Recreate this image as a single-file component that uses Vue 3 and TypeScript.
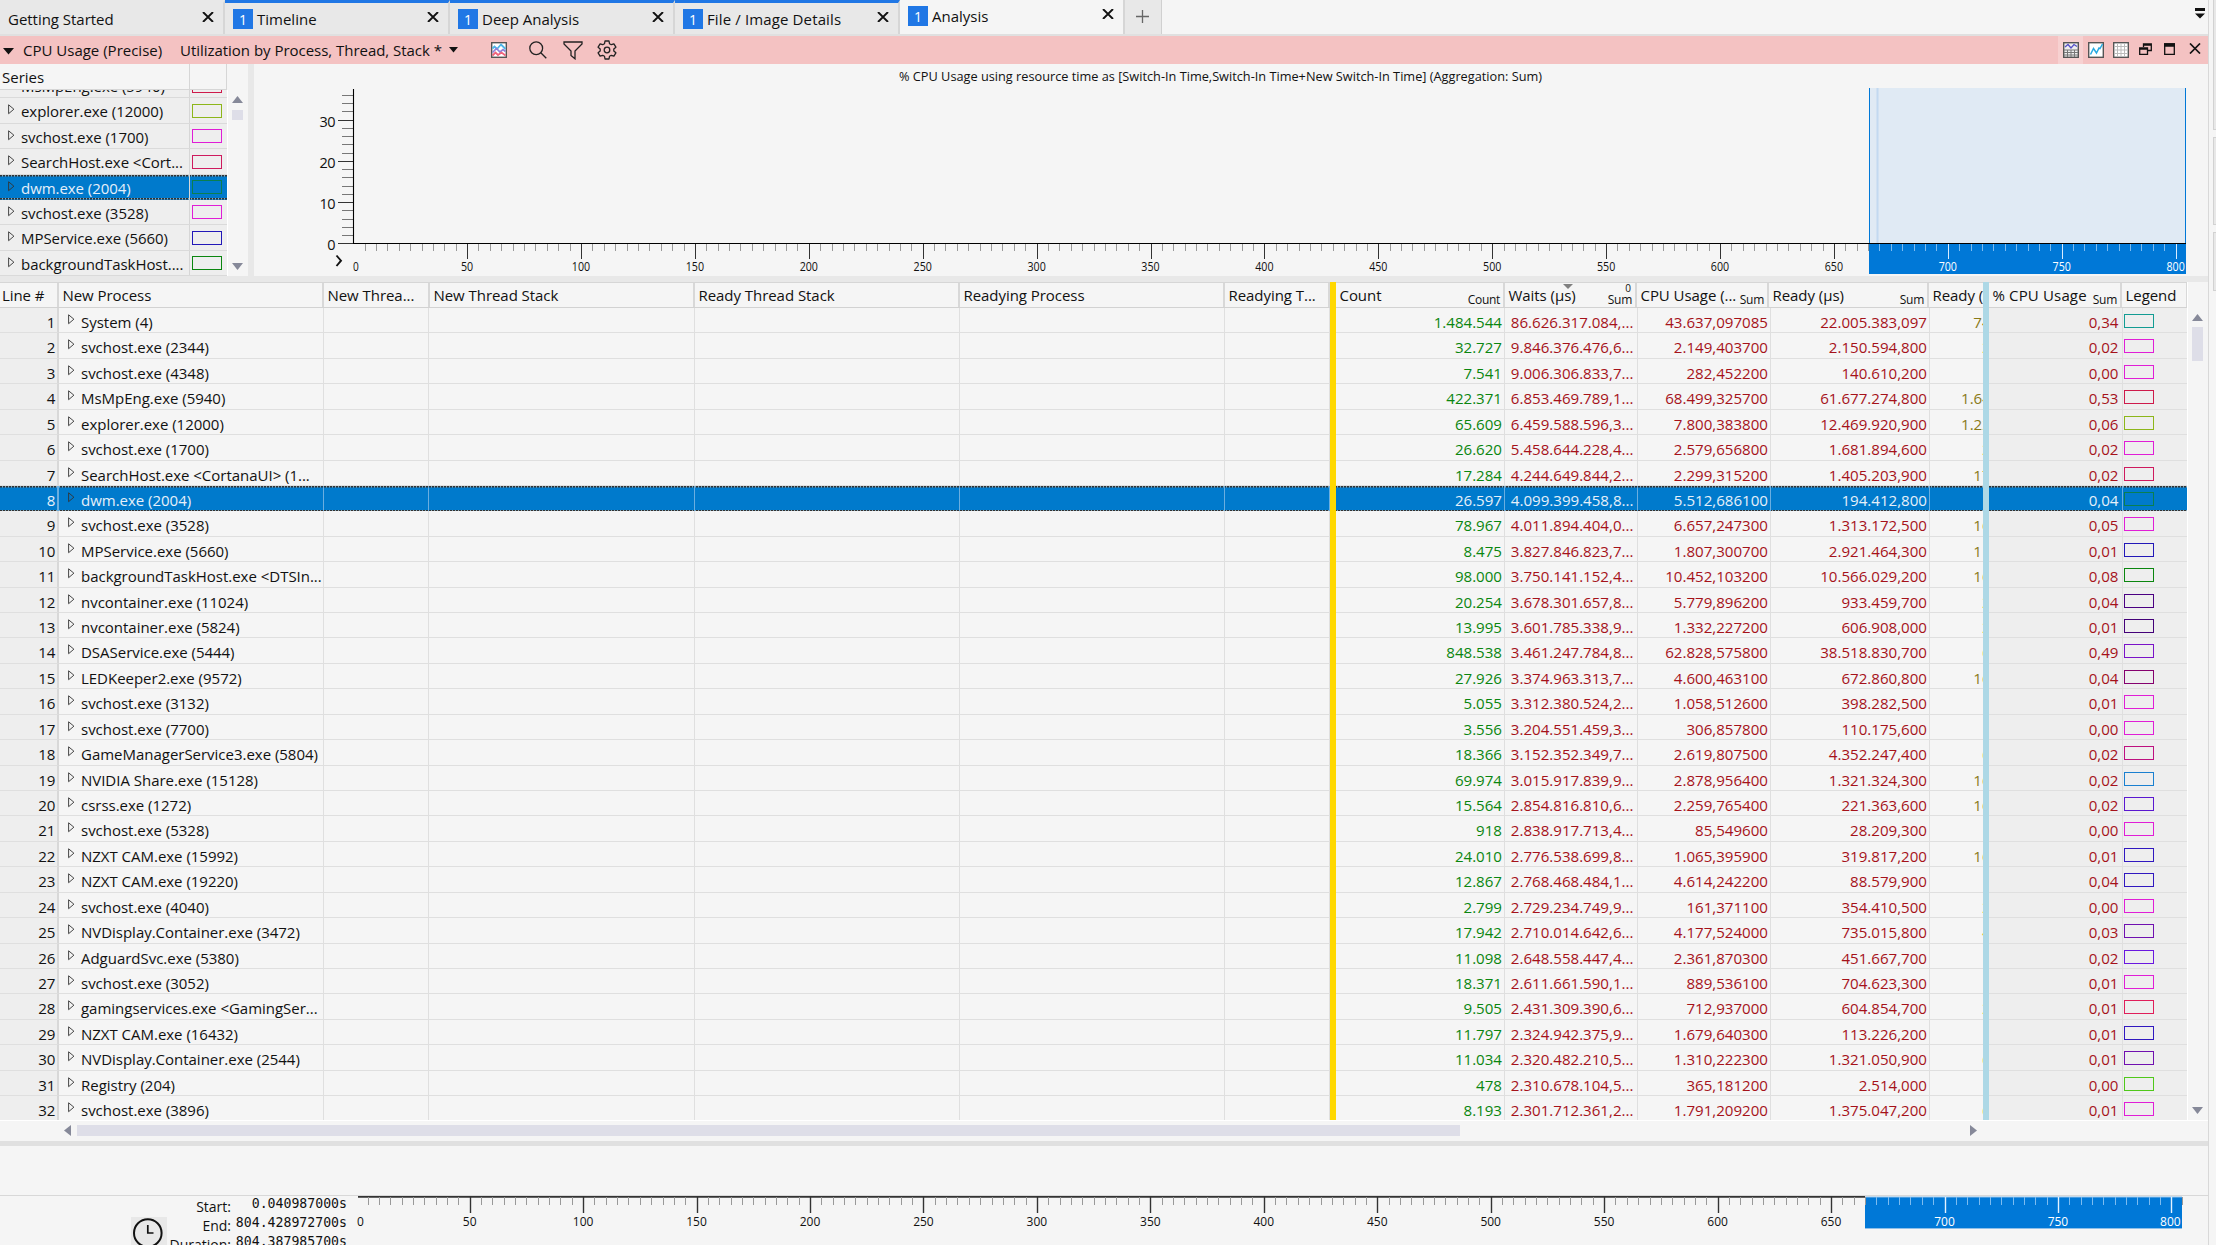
<script setup lang="ts">
interface Tab { title: string; badge: boolean; active?: boolean }
interface Row {
  name: string; count: string; waits: string; cpu: string; ready: string
  max: string; pct: string; color: string
}
interface Tick { x: number; major: boolean; selected: boolean }
interface Label { x: number; text: string; selected: boolean }

const tabs: Tab[] = [
  { title: 'Getting Started', badge: false },
  { title: 'Timeline', badge: true },
  { title: 'Deep Analysis', badge: true },
  { title: 'File / Image Details', badge: true },
  { title: 'Analysis', badge: true, active: true },
]

const magenta = '#e01ed6'
const source: string[][] = [
  ['System (4)', '1.484.544', '86.626.317.084,...', '43.637,097085', '22.005.383,097', ' 74', '0,34', '#129c93'],
  ['svchost.exe (2344)', '32.727', '9.846.376.476,6...', '2.149,403700', '2.150.594,800', '  2', '0,02', magenta],
  ['svchost.exe (4348)', '7.541', '9.006.306.833,7...', '282,452200', '140.610,200', '', '0,00', magenta],
  ['MsMpEng.exe (5940)', '422.371', '6.853.469.789,1...', '68.499,325700', '61.677.274,800', '1.64', '0,53', '#ce1a4b'],
  ['explorer.exe (12000)', '65.609', '6.459.588.596,3...', '7.800,383800', '12.469.920,900', '1.22', '0,06', '#8db61a'],
  ['svchost.exe (1700)', '26.620', '5.458.644.228,4...', '2.579,656800', '1.681.894,600', '  2', '0,02', magenta],
  ['SearchHost.exe <CortanaUI> (1...', '17.284', '4.244.649.844,2...', '2.299,315200', '1.405.203,900', ' 17', '0,02', '#ce1a5e'],
  ['dwm.exe (2004)', '26.597', '4.099.399.458,8...', '5.512,686100', '194.412,800', '', '0,04', '#0b7f50'],
  ['svchost.exe (3528)', '78.967', '4.011.894.404,0...', '6.657,247300', '1.313.172,500', ' 16', '0,05', magenta],
  ['MPService.exe (5660)', '8.475', '3.827.846.823,7...', '1.807,300700', '2.921.464,300', ' 11', '0,01', '#2218b8'],
  ['backgroundTaskHost.exe <DTSIn...', '98.000', '3.750.141.152,4...', '10.452,103200', '10.566.029,200', ' 16', '0,08', '#0a860f'],
  ['nvcontainer.exe (11024)', '20.254', '3.678.301.657,8...', '5.779,896200', '933.459,700', '  2', '0,04', '#4b0082'],
  ['nvcontainer.exe (5824)', '13.995', '3.601.785.338,9...', '1.332,227200', '606.908,000', '  2', '0,01', '#430078'],
  ['DSAService.exe (5444)', '848.538', '3.461.247.784,8...', '62.828,575800', '38.518.830,700', '  6', '0,49', '#7a12c8'],
  ['LEDKeeper2.exe (9572)', '27.926', '3.374.963.313,7...', '4.600,463100', '672.860,800', ' 16', '0,04', '#85006e'],
  ['svchost.exe (3132)', '5.055', '3.312.380.524,2...', '1.058,512600', '398.282,500', '', '0,01', magenta],
  ['svchost.exe (7700)', '3.556', '3.204.551.459,3...', '306,857800', '110.175,600', '', '0,00', magenta],
  ['GameManagerService3.exe (5804)', '18.366', '3.152.352.349,7...', '2.619,807500', '4.352.247,400', '  6', '0,02', '#be1080'],
  ['NVIDIA Share.exe (15128)', '69.974', '3.015.917.839,9...', '2.878,956400', '1.321.324,300', ' 16', '0,02', '#1a80d0'],
  ['csrss.exe (1272)', '15.564', '2.854.816.810,6...', '2.259,765400', '221.363,600', ' 16', '0,02', '#5a18d0'],
  ['svchost.exe (5328)', '918', '2.838.917.713,4...', '85,549600', '28.209,300', '', '0,00', magenta],
  ['NZXT CAM.exe (15992)', '24.010', '2.776.538.699,8...', '1.065,395900', '319.817,200', ' 16', '0,01', '#3018c0'],
  ['NZXT CAM.exe (19220)', '12.867', '2.768.468.484,1...', '4.614,242200', '88.579,900', '', '0,04', '#3018c0'],
  ['svchost.exe (4040)', '2.799', '2.729.234.749,9...', '161,371100', '354.410,500', '  2', '0,00', magenta],
  ['NVDisplay.Container.exe (3472)', '17.942', '2.710.014.642,6...', '4.177,524000', '735.015,800', '  4', '0,03', '#7010b0'],
  ['AdguardSvc.exe (5380)', '11.098', '2.648.558.447,4...', '2.361,870300', '451.667,700', '', '0,02', '#6a18e0'],
  ['svchost.exe (3052)', '18.371', '2.611.661.590,1...', '889,536100', '704.623,300', '', '0,01', magenta],
  ['gamingservices.exe <GamingSer...', '9.505', '2.431.309.390,6...', '712,937000', '604.854,700', '  2', '0,01', '#e01e5a'],
  ['NZXT CAM.exe (16432)', '11.797', '2.324.942.375,9...', '1.679,640300', '113.226,200', '', '0,01', '#3018c0'],
  ['NVDisplay.Container.exe (2544)', '11.034', '2.320.482.210,5...', '1.310,222300', '1.321.050,900', '  6', '0,01', '#7010b0'],
  ['Registry (204)', '478', '2.310.678.104,5...', '365,181200', '2.514,000', '', '0,00', '#4fc81a'],
  ['svchost.exe (3896)', '8.193', '2.301.712.361,2...', '1.791,209200', '1.375.047,200', '  6', '0,01', magenta],
]
const rows: Row[] = source.map(([name, count, waits, cpu, ready, max, pct, color]) =>
  ({ name, count, waits, cpu, ready, max, pct, color }))
const selectedRow = 7

const series = [
  { name: 'MsMpEng.exe (5940)', color: '#ce1a4b' },
  { name: 'explorer.exe (12000)', color: '#8db61a' },
  { name: 'svchost.exe (1700)', color: magenta },
  { name: 'SearchHost.exe <Cort...', color: '#ce1a5e' },
  { name: 'dwm.exe (2004)', color: '#0b7f50' },
  { name: 'svchost.exe (3528)', color: magenta },
  { name: 'MPService.exe (5660)', color: '#2218b8' },
  { name: 'backgroundTaskHost....', color: '#0a860f' },
]

function makeTicks(origin: number, scale: number, selectionStart: number): Tick[] {
  const out: Tick[] = []
  for (let v = 5; v <= 800; v += 5) {
    const x = Math.round(origin + v * scale)
    out.push({ x, major: v % 50 === 0, selected: x > selectionStart })
  }
  return out
}
function makeLabels(origin: number, scale: number, selectionStart: number): Label[] {
  const out: Label[] = []
  for (let v = 50; v <= 800; v += 50) {
    const x = origin + v * scale
    out.push({ x, text: String(v), selected: x > selectionStart })
  }
  return out
}

/* graph coordinates are local to their svg: the upper one starts at x = 254, the lower one at x = 350 */
const graphTicks = makeTicks(99.2, 2.278, 1616)
const graphLabels = makeLabels(99.2, 2.278, 1616)
const rangeTicks = makeTicks(6.2, 2.269, 1515)
const rangeLabels = makeLabels(6.2, 2.269, 1515)
const yTicks = Array.from({ length: 19 }, (_, i) => ({ y: Math.round(179.3 - i * 8.25), major: i % 5 === 0, value: i * 2 }))
const yMajors = yTicks.filter(t => t.major)
</script>

<template>
  <div class="window">
    <div class="main">
      <div class="tabs">
        <div v-for="t in tabs" :key="t.title" class="tab" :class="{ active: t.active, badged: t.badge && !t.active }">
          <span v-if="t.badge" class="badge">1</span>
          <span class="tab-title">{{ t.title }}</span>
          <svg class="tab-x" width="12" height="10"><path d="M1 0 11 10M11 0 1 10" stroke="#111" stroke-width="1.9" fill="none" /></svg>
        </div>
        <div class="tab-add"><svg width="13" height="13"><path d="M6.5 0V13M0 6.5H13" stroke="#666" stroke-width="1.3" /></svg></div>
        <svg class="tab-menu" width="10" height="11"><path d="M0 0H10V3H0ZM0 5.500H10L5 10.500Z" fill="#111" /></svg>
      </div>

      <div class="toolbar">
        <svg class="tri-a" width="11" height="7"><path d="M0 0H11L5.5 6.500Z" fill="#111" /></svg>
        <span class="tool-title">CPU Usage (Precise)</span>
        <span class="tool-preset">Utilization by Process, Thread, Stack *</span>
        <svg class="tri-b" width="9" height="6"><path d="M0 0H9L4.500 5.500Z" fill="#111" /></svg>
        <svg class="ic-chart" width="16" height="16" viewBox="0 0 16 16" fill="none">
          <rect x=".7" y=".7" width="14.600" height="14.600" fill="#fff" stroke="#555" stroke-width="1.400" />
          <path d="M1.500 6.500 3.500 4.500 6 7 10 2.500 12 4.500 14.500 7" stroke="#4db5e8" stroke-width="1.800" />
          <path d="M1.500 10.500 5.500 6.500 9 10 12 7.500 14.500 9.500" stroke="#8f80d8" stroke-width="1.700" />
          <path d="M1.500 13.500 4.500 10.500 7 13 10.500 10.500 14.500 13.500" stroke="#f0637c" stroke-width="1.800" />
        </svg>
        <svg class="ic-search" width="18" height="18" viewBox="0 0 18 18" fill="none" stroke="#222" stroke-width="1.300">
          <circle cx="7.200" cy="7.200" r="6.400" /><path d="M11.800 11.800 17.300 17.300" />
        </svg>
        <svg class="ic-filter" width="20" height="19" viewBox="0 0 20 19" fill="none" stroke="#222" stroke-width="1.300">
          <path d="M1 1H19V3L12 10V17.800L8 14.500V10L1 3Z" />
        </svg>
        <svg class="ic-gear" width="20" height="20" viewBox="0 0 20 20" fill="none" stroke="#222" stroke-width="1.300" stroke-linejoin="round">
          <path d="M8 1h4l.5 2.700 1.800 1 2.600-.9 2 3.400-2.100 1.800v2l2.100 1.800-2 3.400-2.600-.9-1.800 1L12 19H8l-.5-2.700-1.800-1-2.600.9-2-3.400L3.200 11V9L1.100 7.200l2-3.400 2.600.9 1.800-1Z" />
          <circle cx="10" cy="10" r="2.800" />
        </svg>
        <div class="tool-right">
          <div class="tool-on">
            <svg width="16" height="16" viewBox="0 0 16 16" fill="none">
              <rect x=".7" y=".7" width="14.600" height="14.600" fill="#eee" stroke="#555" stroke-width="1.400" />
              <path d="M2 5 5 2.500 8 6 11 2.500 14 4.500" stroke="#5550c8" stroke-width="1.300" />
              <path d="M1 8H15M1 10.500H15M1 13H15M4.500 8V15M8 8V15M11.500 8V15" stroke="#777" />
            </svg>
          </div>
          <svg class="ic-r1" width="16" height="16" viewBox="0 0 16 16" fill="none">
            <rect x=".7" y=".7" width="14.600" height="14.600" fill="#fff" stroke="#555" stroke-width="1.400" />
            <path d="M2.500 12.500 5.500 6.500 8.500 11 11 6 12 6.500 14.500 2" stroke="#27a9e1" stroke-width="1.500" />
          </svg>
          <svg class="ic-r2" width="16" height="16" viewBox="0 0 16 16" fill="none">
            <rect x=".7" y=".7" width="14.600" height="14.600" fill="#fff" stroke="#555" stroke-width="1.400" />
            <path d="M1 4.500H15M1 8H15M1 11.500H15M4.500 1V15M8 1V15M11.500 1V15" stroke="#bbb" />
          </svg>
          <svg class="ic-r3" width="13" height="12" viewBox="0 0 13 12" fill="none" stroke="#111" stroke-width="1.300">
            <path d="M4.500 4V1H12.300V7.500H9M4.500 2H12.300" /><path d="M.7 5H8.500V11.300H.7ZM.7 6H8.500" />
          </svg>
          <svg class="ic-r4" width="11" height="12" fill="none" stroke="#111"><path d="M.7 1V11.300H10.300V1Z" stroke-width="1.300" /><path d="M0 2H11" stroke-width="3.500" /></svg>
          <svg class="ic-r5" width="12" height="11"><path d="M1 .5 11 10.500M11 .5 1 10.500" stroke="#111" stroke-width="1.700" /></svg>
        </div>
      </div>

      <div class="upper">
        <div class="series">
          <div class="series-head"><span>Series</span><span></span></div>
          <div class="series-wrap">
            <div class="series-body">
              <div v-for="(s, i) in series" :key="s.name" class="srow" :class="{ sel: i === 4 }">
                <div class="sname">
                  <svg class="exp" width="7" height="11"><path d="M.6 .8V9.700L5.900 5.200Z" fill="none" stroke="#333" stroke-width=".9" /></svg>
                  <span>{{ s.name }}</span>
                </div>
                <div class="sswatch"><i class="swatch" :style="{ borderColor: s.color }"></i></div>
              </div>
            </div>
            <div class="sbar">
              <svg width="11" height="7"><path d="M5.500 0 11 7H0Z" fill="#868999" /></svg>
              <i></i>
              <svg class="down" width="11" height="7"><path d="M0 0H11L5.500 7Z" fill="#868999" /></svg>
            </div>
          </div>
        </div>
        <div class="vsplit"></div>
        <svg class="graph" width="1954" height="212" viewBox="0 0 1954 212">
          <text x="645" y="16.500" font-size="13" textLength="643" lengthAdjust="spacingAndGlyphs" fill="#111">% CPU Usage using resource time as [Switch-In Time,Switch-In Time+New Switch-In Time] (Aggregation: Sum)</text>
          <rect x="1615.500" y="24" width="316.500" height="155" fill="#e0eaf4" />
          <path d="M1623.500 24V179" stroke="#c3d9f0" stroke-width="2" />
          <rect x="1615" y="180" width="317" height="30" fill="#0078d7" />
          <path d="M1615.500 24V180M1931.500 24V180" stroke="#0078d7" stroke-width="1" />
          <path v-for="t in yTicks" :key="t.y" :d="`M${t.major ? 84 : 88} ${t.y}.5H99`" :stroke="t.major ? '#333' : '#777'" />
          <path d="M99.500 25V180M99 179.500H1932" stroke="#000" stroke-width="1.100" />
          <text v-for="t in yMajors" :key="t.value" x="81" :y="t.y + 6.500" text-anchor="end" font-size="14.500" letter-spacing="-.5" fill="#111">{{ t.value }}</text>
          <path v-for="t in graphTicks" :key="t.x" :d="`M${t.x}.5 180V${t.major ? 195 : 187}`" :stroke="t.selected ? (t.major ? '#d8ecff' : '#7dbcf0') : t.major ? '#333' : '#999'" />
          <text x="99" y="207" font-size="12" textLength="5.800" lengthAdjust="spacingAndGlyphs" fill="#111">0</text>
          <text v-for="l in graphLabels" :key="l.text" :x="l.x" y="207" text-anchor="middle" font-size="12" :textLength="l.text.length * 6.100" lengthAdjust="spacingAndGlyphs" :fill="l.selected ? '#fff' : '#111'">{{ l.text }}</text>
          <path d="M82.500 191.500 87 196.700 82.500 202" fill="none" stroke="#111" stroke-width="1.900" />
        </svg>
      </div>

      <div class="hsplit"></div>

      <div class="table-zone">
        <div class="table">
          <div class="thead">
            <div class="h h0">Line #</div>
            <div class="h">New Process</div>
            <div class="h">New Threa...</div>
            <div class="h">New Thread Stack</div>
            <div class="h">Ready Thread Stack</div>
            <div class="h">Readying Process</div>
            <div class="h">Readying T...</div>
            <div class="gold"></div>
            <div class="h">Count<small>Count</small></div>
            <div class="h hw">Waits (µs)<small>Sum</small>
              <svg class="sort" width="10" height="5"><path d="M0 0H10L5 5Z" fill="#808080" /></svg><em>0</em>
            </div>
            <div class="h">CPU Usage (...<small>Sum</small></div>
            <div class="h">Ready (µs)<small>Sum</small></div>
            <div class="h cut">Ready (</div>
            <div class="blue"></div>
            <div class="h wide">% CPU Usage<small>Sum</small></div>
            <div class="h last">Legend</div>
          </div>
          <div class="tbody">
            <div v-for="(r, i) in rows" :key="i" class="row" :class="{ sel: i === selectedRow }">
              <div class="c line">{{ i + 1 }}</div>
              <div class="c proc">
                <svg class="exp" width="7" height="11"><path d="M.6 .8V9.700L5.900 5.200Z" fill="none" stroke="#333" stroke-width=".9" /></svg>
                <span>{{ r.name }}</span>
              </div>
              <div class="c"></div><div class="c"></div><div class="c"></div><div class="c"></div><div class="c"></div>
              <div class="gold"></div>
              <div class="c num green">{{ r.count }}</div>
              <div class="c waits">{{ r.waits }}</div>
              <div class="c num red">{{ r.cpu }}</div>
              <div class="c num red">{{ r.ready }}</div>
              <div class="c max" :class="{ one: r.max.startsWith(' '), two: r.max.startsWith('  ') }">{{ r.max.trim() }}</div>
              <div class="blue"></div>
              <div class="c num red pct">{{ r.pct }}</div>
              <div class="c leg"><i class="swatch" :style="{ borderColor: r.color }"></i></div>
            </div>
          </div>
        </div>
        <div class="tscroll">
          <svg width="11" height="7"><path d="M5.500 0 11 7H0Z" fill="#868999" /></svg>
          <i></i>
          <svg class="down" width="11" height="7"><path d="M0 0H11L5.500 7Z" fill="#868999" /></svg>
        </div>
      </div>
      <div class="hscroll">
        <svg width="7" height="11"><path d="M7 0V11L0 5.500Z" fill="#868999" /></svg>
        <i></i>
        <svg class="right" width="7" height="11"><path d="M0 0V11L7 5.500Z" fill="#868999" /></svg>
      </div>
      <div class="thick"></div>
      <div class="blank"></div>

      <div class="footer">
        <div class="clock">
          <svg width="36" height="36" viewBox="0 0 36 36" fill="none" stroke="#111"><circle cx="16.800" cy="16" r="13.800" stroke-width="2" /><path d="M16.800 8V16H22.500" stroke-width="1.700" /></svg>
        </div>
        <div class="labels"><div>Start:</div><div>End:</div><div>Duration:</div></div>
        <div class="values"><div>0.040987000s</div><div>804.428972700s</div><div>804.387985700s</div></div>
        <svg class="range" width="1858" height="49" viewBox="0 0 1858 49">
          <rect x="1515" y="1" width="317" height="32" fill="#0078d7" />
          <path d="M8 .9H1515" stroke="#333" stroke-width="1.800" />
          <path d="M1515 1H1832M1515 32.500H1832" stroke="#8fbfe8" />
          <path v-for="t in rangeTicks" :key="t.x" :d="`M${t.x}.5 1V${t.major ? 17 : 9}`" :stroke="t.selected ? (t.major ? '#e4f2ff' : '#7dbcf0') : t.major ? '#333' : '#999'" :stroke-width="t.major ? 1.400 : 1" />
          <path d="M1832.500 1V9" stroke="#999" />
          <text x="7" y="30" font-size="12" fill="#111">0</text>
          <text v-for="l in rangeLabels" :key="l.text" :x="l.text === '800' ? l.x - 1 : l.x" y="30" text-anchor="middle" font-size="12" :fill="l.selected ? '#fff' : '#111'">{{ l.text }}</text>
        </svg>
      </div>
    </div>
    <div class="side"><i class="s1"></i><i class="s2"></i><i class="s3"></i></div>
  </div>
</template>

<style>
body { background: #f5f5f5; overflow: hidden; }
</style>

<style scoped>
* { box-sizing: border-box; }
.window { display: flex; width: 2216px; height: 1245px; overflow: hidden; background: #f5f5f5; color: #111; font: 15px/20px "Open Sans", "Noto Sans", sans-serif; white-space: nowrap; }
svg { display: block; flex: none; }
.main { width: 2209px; border-right: 1px solid #d8d8d8; display: flex; flex-direction: column; flex: none; }
.side { flex: 1; display: flex; flex-direction: column; padding-left: 4px; gap: 7px; }
.side i { background: #e8e8e8; border: 1px solid #d2d2d2; border-right: 0; }
.s1 { height: 130px; border-top: 0 !important; }
.s2 { height: 88px; }
.s3 { height: 59px; }

.tabs { display: flex; height: 36px; border-bottom: 2px solid #e0e0e0; }
.tab { display: flex; width: 225px; height: 34px; background: #e8e8e8; border-right: 2px solid #d6d6d6; border-top: 3px solid #e8e8e8; padding: 6px 9px 0 8px; }
.tab.badged { border-top-color: #2077e5; }
.tab.active { background: #f5f5f5; border-top-width: 0; }
.badge { width: 20px; height: 20px; background: #2077e5; color: #fff; text-align: center; line-height: 22px; margin-right: 4px; font-size: 14px; }
.tab-title { line-height: 20px; }
.tab:not(.badged):not(.active) .tab-title { letter-spacing: -.03px; }
.tab.badged:nth-child(4) .tab-title { letter-spacing: .13px; }
.tab-x { margin: 3px 0 0 auto; }
.tab-add { width: 37px; height: 34px; background: #e8e8e8; border-right: 1px solid #d0d0d0; padding: 10px 0 0 11px; }
.tab-menu { margin: 8px 3px 0 auto; }

.toolbar { display: flex; height: 28px; background: #f4c2c2; align-items: flex-start; line-height: 29px; }
.tri-a { margin: 12px 9px 0 3px; }
.tool-title { width: 157px; }
.tool-preset { width: 269px; letter-spacing: -.03px; }
.tri-b { margin: 11px 33px 0 0; }
.ic-chart { margin: 6px 22px 0 0; }
.ic-search { margin: 5px 16px 0 0; }
.ic-filter { margin: 5px 15px 0 0; }
.ic-gear { margin: 4px 0 0 -1px; }
.tool-right { display: flex; margin-left: auto; }
.tool-on { background: #f7d1d1; width: 25px; height: 28px; padding: 6px 0 0 5px; margin-right: 5px; }
.ic-r1 { margin: 6px 9px 0 0; }
.ic-r2 { margin: 6px 10px 0 0; }
.ic-r3 { margin: 7px 12px 0 0; }
.ic-r4 { margin: 7px 14px 0 0; }
.ic-r5 { margin: 7px 7px 0 0; }

.upper { display: flex; height: 212px; flex: none; }
.series { width: 248px; }
.series-head { display: flex; height: 26px; border-bottom: 1px solid #d6d6d6; width: 227px; line-height: 27px; }
.series-head span:first-child { width: 190px; padding-left: 2px; border-right: 1px solid #d6d6d6; }
.series-head span:last-child { flex: 1; border-right: 1px solid #d6d6d6; }
.series-wrap { display: flex; height: 186px; }
.series-body { width: 227px; overflow: hidden; }
.srow { display: flex; height: 25.400px; background: #eee; border-bottom: 1px solid #dadada; line-height: 27.400px; }
.srow:first-child { margin-top: -17px; }
.sname { display: flex; width: 190px; overflow: hidden; border-right: 1px solid #d6d6d6; padding-left: 8px; }
.sname span { margin-left: 6px; letter-spacing: -.05px; }
.sswatch { padding: 5.500px 0 0 2px; }
.exp { margin-top: 6px; }
.swatch { display: block; width: 30px; height: 14px; border: 1px solid; }
.sel { color: #e6f0fa; border-bottom: 0 !important; background: repeating-linear-gradient(90deg, #333 0 2px, #8ab 2px 3px) 0 0 / 100% 1.500px no-repeat, repeating-linear-gradient(90deg, #333 0 2px, #8ab 2px 3px) 0 100% / 100% 1.500px no-repeat, #007acc !important; }
.sbar { flex: 1; border-left: 1px solid #fff; display: flex; flex-direction: column; padding: 6px 0 6px 4px; }
.sbar i { width: 11px; height: 10px; margin-top: 7px; background: #dedee8; }
.down { margin-top: auto; }
.vsplit { width: 6px; background: #e8e8e8; }
.hsplit { height: 6px; background: #e8e8e8; flex: none; }

.table-zone { display: flex; height: 838px; flex: none; }
.table { width: 2187px; flex: none; }
.thead { display: grid; height: 26px; border-top: 1px solid #d6d6d6; border-bottom: 1px solid #d2d2d2; grid-template-columns: 59px 265px 106px 265px 265px 265px 105px 6px 169px 132px 132px 160px 54px 6px 133px 65px; }
.h { display: flex; border-right: 2px solid #d8d8d8; padding-left: 3.500px; line-height: 25px; overflow: hidden; letter-spacing: -.05px; }
.h0 { padding-left: 2px; letter-spacing: -.1px; }
.wide { letter-spacing: .15px; }
.last { border-right-width: 1px; }
.cut { border-right: 0; }
.h small { margin: 3px 3px 0 auto; font-size: 12px; line-height: 27px; letter-spacing: -.3px; }
.hw { position: relative; }
.sort { position: absolute; left: 58px; top: 1px; }
.hw em { position: absolute; right: 4px; top: -1px; font: 10px/12px "Open Sans", sans-serif; }
.gold { background: #ffd800; }
.blue { background: #add8e6; }
.thead .gold, .thead .blue { margin: -1px 0; }

.tbody { height: 812px; overflow: hidden; font-size: 15.100px; }
.row { display: grid; height: 25.430px; grid-template-columns: 59px 265px 105px 266px 265px 265px 105px 6px 169px 133px 133px 159px 53px 6px 134px 64px; }
.c { border-right: 1px solid #dfdfdf; border-bottom: 1px solid #dfdfdf; line-height: 28.350px; overflow: hidden; }
.line { background: #eee; text-align: right; border-right: 2px solid #d8d8d8; padding-right: 1.500px; }
.proc { display: flex; padding-left: 9px; font-size: 15px; }
.proc span { margin-left: 6px; letter-spacing: -.02px; }
.num { text-align: right; padding-right: 2px; }
.green { color: #0a860f; }
.red, .waits { color: #a5121a; }
.waits { padding-left: 5.800px; }
.max { color: #8a7a18; padding-left: 31px; border-right: 0; }
.max.one { padding-left: 43.300px; }
.max.two { padding-left: 52px; color: #d8c83c; }
.pct, .leg { background: #eee; }
.pct { padding-right: 3.500px; }
.leg { border-right: 0; padding: 6px 0 0 1px; }
.row.sel .c { background: none; color: #e6f0fa; border-bottom: 0; border-color: #6aaee0; }
.tscroll { flex: 1; border-left: 1px solid #fff; display: flex; flex-direction: column; padding: 32px 0 6px 4px; }
.tscroll i { width: 11px; height: 34px; margin-top: 6px; background: #dedee8; }
.hscroll { height: 21px; display: flex; align-items: flex-start; border-top: 1px solid #fff; padding: 4px 0 0 64px; flex: none; }
.hscroll i { width: 1383px; height: 11px; background: #dedee8; margin-left: 6px; }
.right { margin-left: 510px; }
.thick { height: 5px; background: #e0e0e0; flex: none; }
.blank { height: 50px; border-bottom: 1px solid #d8d8d8; flex: none; }

.footer { display: flex; height: 49px; flex: none; }
.clock { margin: 21px 0 0 131px; width: 36px; height: 36px; background: #e8e8e8; flex: none; }
.labels { width: 64px; text-align: right; line-height: 19px; font-size: 14px; padding-top: 1px; display: flex; flex-direction: column; align-items: flex-end; flex: none; }
.values { width: 116px; text-align: right; font: 13.200px/19px "DejaVu Sans Mono", monospace; margin-top: -2px; flex: none; }
.range { margin-left: 3px; }
</style>
